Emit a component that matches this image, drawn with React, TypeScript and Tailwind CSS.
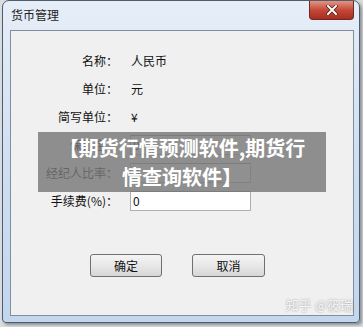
import React from 'react';

const rows = [
  { label: '名称：', value: '人民币', input: false },
  { label: '单位：', value: '元', input: false },
  { label: '简写单位：', value: '¥', input: false },
  { label: '保证金：', value: '0', input: true },
  { label: '经纪人比率：', value: '0', input: true },
  { label: '手续费(%)：', value: '0', input: true },
];

const font = { fontFamily: '"Noto Sans CJK SC", "Liberation Sans", sans-serif' };

const App: React.FC = () => {
  return (
    <div className="relative w-[363px] h-[327px] overflow-hidden bg-[#d9dde2]" style={font}>
      {/* Window frame */}
      <div className="ml-[2px] w-[358px] h-[323px] rounded-t-[7px] rounded-b-[4px] border border-[#4f5d6c] bg-gradient-to-b from-[#e6eef8] via-[#cfdff1] to-[#c2d6ee] shadow-[2px_2px_3px_rgba(0,0,0,0.35)] flex flex-col">
        {/* Title bar */}
        <div className="h-[29px] flex items-start justify-between">
          <span className="pl-[8px] pt-[6px] text-[12px] leading-[16px] text-[#1e1e1e]">货币管理</span>
          <div className="mr-[5px] w-[45px] h-[19px] rounded-b-[4px] border border-t-0 border-[#6b2a22] bg-gradient-to-b from-[#e29484] via-[#c4483a] to-[#a92d1c] flex items-center justify-center">
            <svg width="12" height="10" viewBox="0 0 12 10">
              <path d="M2 1 L10 9 M10 1 L2 9" stroke="#4a1a12" strokeWidth="3.4" strokeLinecap="square" />
              <path d="M2 1 L10 9 M10 1 L2 9" stroke="#ffffff" strokeWidth="2" strokeLinecap="square" />
            </svg>
          </div>
        </div>

        {/* Client area */}
        <div className="ml-[7px] mr-[5px] mb-[6px] flex-1 border border-[#7f8fa0] bg-[#f0f0f0] flex flex-col text-[12px] text-[#111]">
          <div className="pt-[16px] grid grid-cols-[107px_1fr] gap-x-[12px]">
            {rows.map((r) => (
              <React.Fragment key={r.label}>
                <div className="h-[28px] flex items-center justify-end">{r.label}</div>
                <div className="h-[28px] flex items-center">
                  {r.input ? (
                    <div className="w-[121px] h-[20px] border border-[#a9b0b8] border-t-[#8a9096] bg-white pl-[2px] flex items-center">
                      {r.value}
                    </div>
                  ) : (
                    <span className="pl-[1px]">{r.value}</span>
                  )}
                </div>
              </React.Fragment>
            ))}
          </div>

          {/* Buttons */}
          <div className="mt-[39px] pl-[79px] flex gap-[30px]">
            <button className="w-[72px] h-[23px] rounded-[3px] border border-[#707070] bg-gradient-to-b from-[#f4f4f4] via-[#e8e8e8] to-[#d6d6d6] text-[12px] text-[#111]">
              确定
            </button>
            <button className="w-[73px] h-[23px] rounded-[3px] border border-[#707070] bg-gradient-to-b from-[#f4f4f4] via-[#e8e8e8] to-[#d6d6d6] text-[12px] text-[#111]">
              取消
            </button>
          </div>
        </div>
      </div>

      {/* Title overlay */}
      <div className="absolute left-[38px] top-[132px] w-[288px] h-[60px] bg-[rgba(120,120,120,0.82)] flex flex-col items-center justify-center text-white font-bold text-[20px] leading-[29px]">
        <div>【期货行情预测软件,期货行</div>
        <div>情查询软件】</div>
      </div>

      {/* Watermark */}
      <div className="absolute right-[10px] top-[295px] text-[13px] text-[#f6f6f6] [text-shadow:0_0_2px_rgba(0,0,0,0.4)]">
        知乎 @筱瑞
      </div>
    </div>
  );
};

export default App;
